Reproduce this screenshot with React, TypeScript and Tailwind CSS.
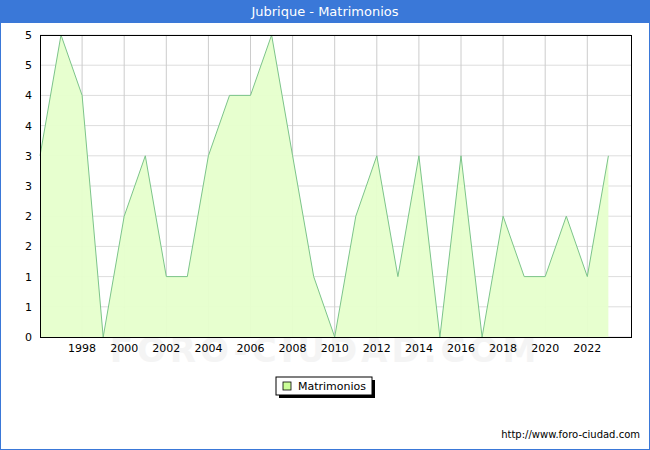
const vals=[3,5,4,0,2,3,1,1,3,4,4,5,3,1,0,2,3,1,3,0,3,0,2,1,1,2,1,3];
const X=(i:number)=>40+i*21.05;
const Y=(v:number)=>337-v*60.4;
export default function App(){
  const pts=vals.map((v,i)=>`${X(i).toFixed(1)},${Y(v).toFixed(1)}`).join(" ");
  const ylab=["0","1","1","2","2","3","3","4","4","5","5"];
  return(
  <div className="w-[650px] h-[450px] bg-white border border-[#3a78d8] flex flex-col" style={{fontFamily:"'DejaVu Sans',sans-serif"}}>
    <div className="h-[22px] bg-[#3a78d8] text-white text-[13px] flex items-center justify-center shrink-0">Jubrique - Matrimonios</div>
    <div className="relative flex-1">
      <svg width="648" height="426" className="absolute left-[-1px] top-[-1px]">
        <text x="325" y="340" textAnchor="middle" fontSize="34" fill="#f4f4f4" fontWeight="bold" letterSpacing="4">FORO-CIUDAD.COM</text>
        {Array.from({length:11}).map((_,k)=>{const y=337-k*30.2-22;return <g key={k}><line x1="40" x2="631" y1={y} y2={y} stroke="#dddddd"/><text x="32" y={y+4} textAnchor="end" fontSize="11" fill="#000">{ylab[k]}</text></g>})}
        {vals.map((_,i)=>(i%2===0&&i>0)?<g key={i}><line x1={X(i)} x2={X(i)} y1={13} y2={315} stroke="#cccccc"/><text x={X(i)} y={330} textAnchor="middle" fontSize="11">{1996+i}</text></g>:null)}
        <g transform="translate(0,-22)">
          <polygon points={`40,337 ${pts} ${X(27)},337`} fill="#e6ffcc" fillOpacity="0.95"/>
          <polyline points={pts} fill="none" stroke="#7cc48a" strokeWidth="1"/>
        </g>
        <rect x="40.5" y="13.5" width="591" height="302" fill="none" stroke="#000"/>
        <rect x="279" y="358" width="96" height="18" fill="#000"/>
        <rect x="276" y="355" width="96" height="18" fill="#fff" stroke="#000"/>
        <rect x="283" y="360" width="8" height="8" fill="#ccff99" stroke="#000" strokeWidth="0.8"/>
        <text x="298" y="368" fontSize="11">Matrimonios</text>
        <text x="640" y="416" textAnchor="end" fontSize="10">http://www.foro-ciudad.com</text>
      </svg>
    </div>
  </div>);
}
